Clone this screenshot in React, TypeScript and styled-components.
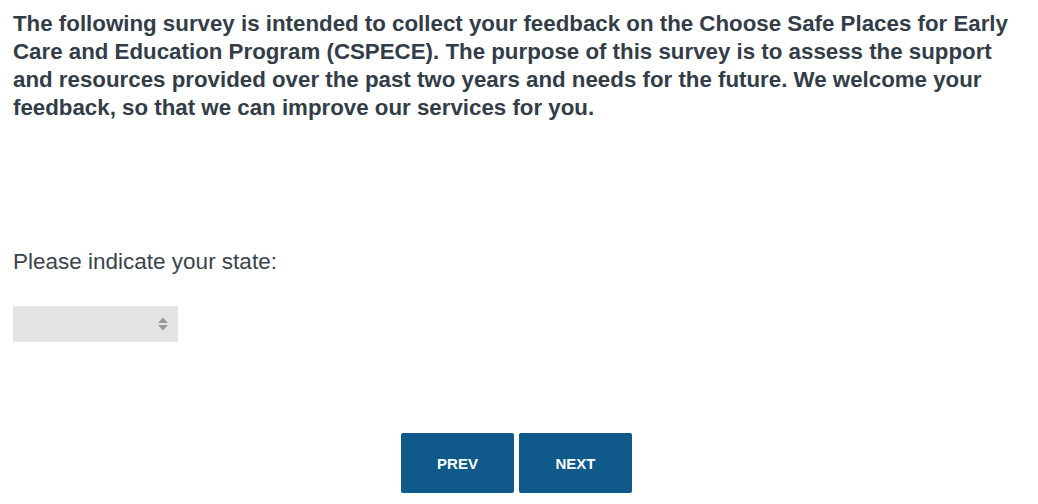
import React from "react";
import styled, { createGlobalStyle } from "styled-components";

const GlobalStyle = createGlobalStyle`
  body {
    margin: 0;
    background: #ffffff;
    font-family: "Liberation Sans", Arial, sans-serif;
  }
`;

const Page = styled.div`
  display: flex;
  flex-direction: column;
  padding: 10px 13px 0 13px;
`;

const Intro = styled.p`
  margin: 0;
  width: 1012px;
  font-size: 22.3px;
  line-height: 28px;
  font-weight: bold;
  color: #333d48;
`;

const Question = styled.label`
  margin-top: 126px;
  font-size: 22.5px;
  line-height: 28px;
  color: #3a434c;
`;

const SelectBox = styled.div`
  margin-top: 30px;
  width: 165px;
  height: 36px;
  background: #e3e3e3;
  display: flex;
  align-items: center;
  justify-content: flex-end;
  padding-right: 9px;
  box-sizing: border-box;
`;

const Nav = styled.div`
  display: flex;
  justify-content: center;
  gap: 5px;
  margin-top: 91px;
  padding-right: 5px;
`;

const NavButton = styled.button`
  width: 113px;
  height: 60px;
  border: none;
  border-radius: 2px;
  background: #0f5a8a;
  color: #ffffff;
  font-family: "Liberation Sans", Arial, sans-serif;
  font-size: 15px;
  font-weight: bold;
`;

const Arrows = () => (
  <svg width="12" height="14" viewBox="0 0 12 14">
    <path d="M6 0.5 L11 6 L1 6 Z" fill="#999999" />
    <path d="M6 13.5 L11 8 L1 8 Z" fill="#999999" />
  </svg>
);

export default function App() {
  return (
    <>
      <GlobalStyle />
      <Page>
        <Intro>
          The following survey is intended to collect your feedback on the Choose Safe Places for Early
          Care and Education Program (CSPECE). The purpose of this survey is to assess the support
          and resources provided over the past two years and needs for the future. We welcome your
          feedback, so that we can improve our services for you.
        </Intro>
        <Question>Please indicate your state:</Question>
        <SelectBox>
          <Arrows />
        </SelectBox>
        <Nav>
          <NavButton>PREV</NavButton>
          <NavButton>NEXT</NavButton>
        </Nav>
      </Page>
    </>
  );
}
